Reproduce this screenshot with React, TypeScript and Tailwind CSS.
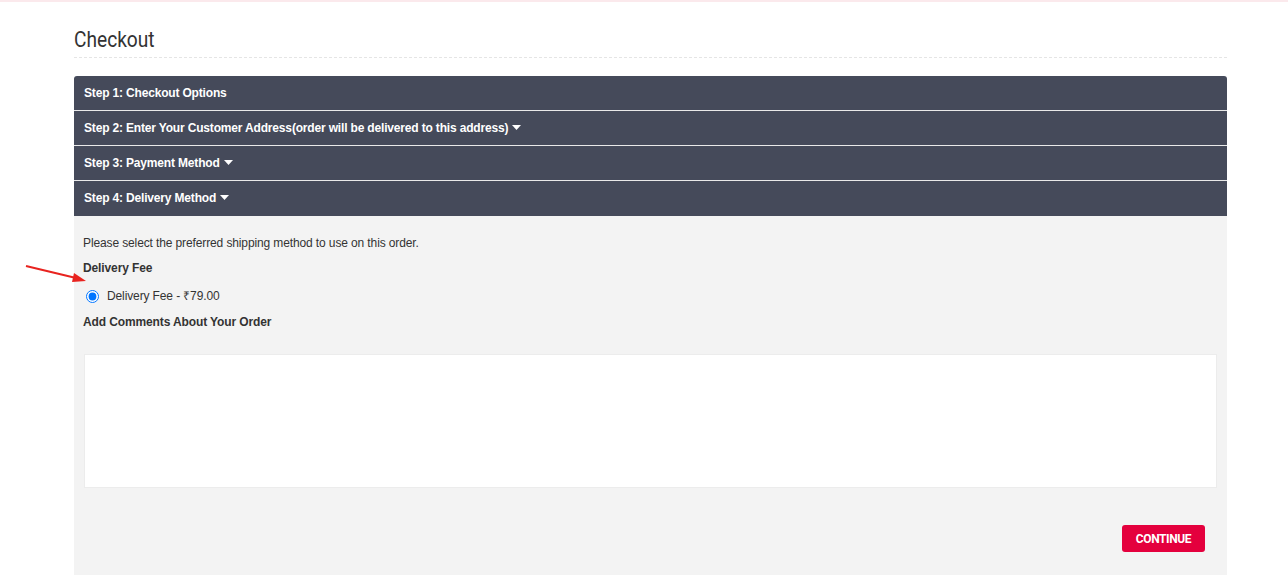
import React from "react";

const Caret = () => (
  <svg width="9" height="5" viewBox="0 0 9 5" className="inline-block ml-[4px] mb-[1px]">
    <path d="M0 0 L9 0 L4.5 5 Z" fill="#fff" />
  </svg>
);

export default function App() {
  const steps = [
    { t: "Step 1: Checkout Options", c: false },
    { t: "Step 2: Enter Your Customer Address(order will be delivered to this address)", c: true },
    { t: "Step 3: Payment Method", c: true },
    { t: "Step 4: Delivery Method", c: true },
  ];
  return (
    <div className="relative w-[1288px] h-[575px] overflow-hidden bg-white" style={{ fontFamily: "Arial, 'Liberation Sans', sans-serif" }}>
      <div className="h-[2px] bg-[#fbe9ec]" />
      <div className="w-[1153px] ml-[74px] pt-[25px]">
        <h1 className="text-[22px] leading-[26px] text-[#333] pb-[4px] border-b border-dashed border-[#e5e5e5]" style={{ fontFamily: "Roboto, sans-serif" }}>
          <span className="inline-block scale-x-[0.87] origin-left">Checkout</span>
        </h1>
        <div className="mt-[18px] rounded-t-[3px] overflow-hidden">
          {steps.map((s, i) => (
            <div key={i} className={`bg-[#454a5a] flex items-center px-[10px] text-white text-[12px] font-bold tracking-[-0.17px] ${i > 0 ? "h-[35px] border-t border-[#e9e9e9]" : "h-[34px]"} ${i === 3 ? "h-[36px] pb-[1px]" : ""}`}>
              <span>{s.t}</span>
              {s.c && <Caret />}
            </div>
          ))}
          <div className="bg-[#f3f3f3] h-[400px] px-[9px] pt-[19px] text-[12px] text-[#333] tracking-[-0.12px]">
            <p className="leading-[16px]">Please select the preferred shipping method to use on this order.</p>
            <p className="font-bold mt-[9px] leading-[16px]">Delivery Fee</p>
            <label className="flex items-center mt-[12px] ml-[3px] leading-[16px]">
              <input type="radio" defaultChecked className="w-[13px] h-[13px] m-0 accent-[#0075ff]" />
              <span className="ml-[8px]">Delivery Fee - ₹79.00</span>
            </label>
            <p className="font-bold mt-[10px] leading-[16px]">Add Comments About Your Order</p>
            <textarea className="block mt-[24px] ml-[1px] w-[1133px] h-[134px] bg-white border border-[#ececec] resize-none outline-none" />
            <div className="flex justify-end mt-[37px] pr-[13px]">
              <button className="w-[83px] h-[27px] bg-[#e4003d] rounded-[3px] text-white text-[12px] font-bold tracking-[-0.4px]" style={{ fontFamily: "Roboto, sans-serif" }}>
                CONTINUE
              </button>
            </div>
          </div>
        </div>
      </div>
      <svg className="absolute left-[24px] top-[262px]" width="66" height="24" viewBox="0 0 66 24">
        <line x1="2" y1="4" x2="52" y2="16" stroke="#e8231f" strokeWidth="2" />
        <path d="M62 19 L50 11 L48 20 Z" fill="#e8231f" />
      </svg>
    </div>
  );
}
